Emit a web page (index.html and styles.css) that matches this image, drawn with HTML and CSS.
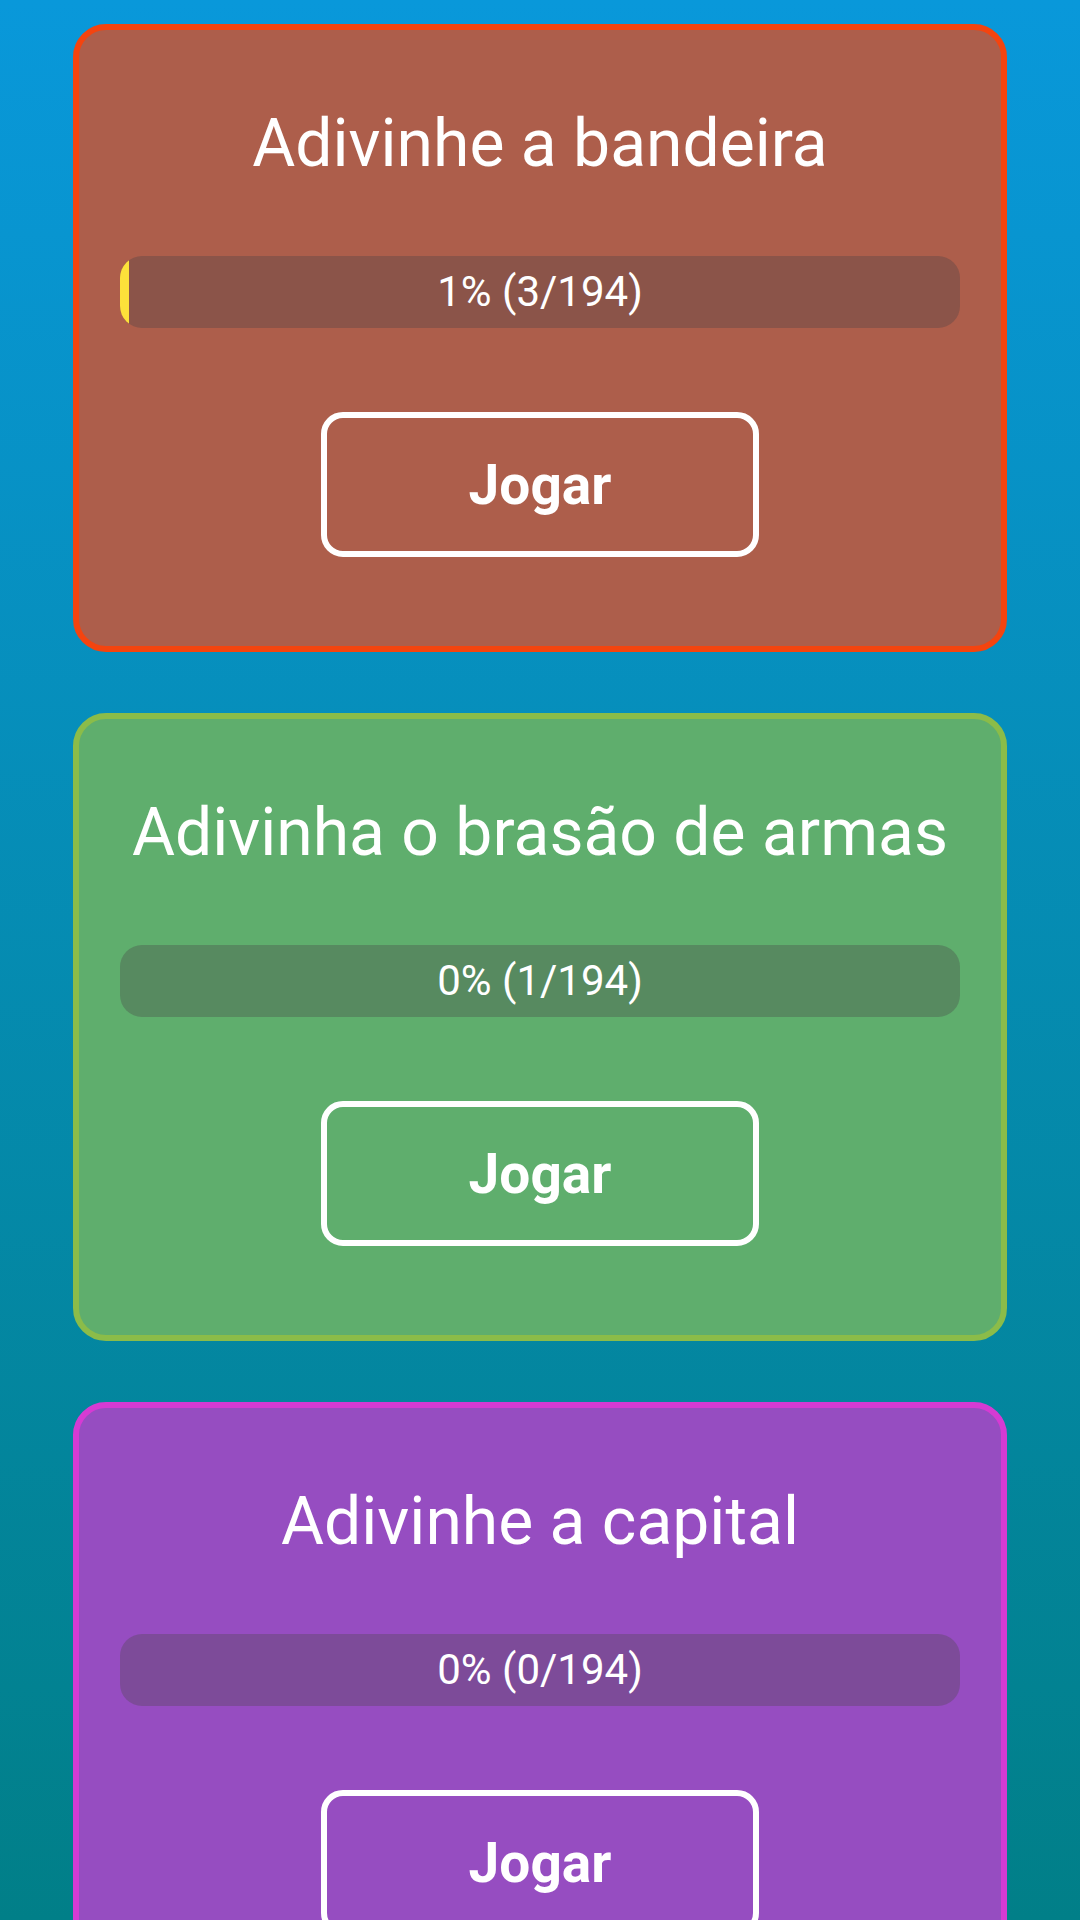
FILE: index.html
```html
<!DOCTYPE html>
<html lang="pt">
<head>
    <meta charset="UTF-8">
    <meta name="viewport" content="width=device-width, initial-scale=1.0">
    <title>Jogos</title>
    <link rel="stylesheet" href="styles.css">
</head>
<body>
    <main class="game-list">
        <section class="game-card card-flag">
            <h2 class="game-title">Adivinhe a bandeira</h2>
            <div class="progress">
                <div class="progress-fill" style="width: 1.1%;"></div>
                <span class="progress-label">1% (3/194)</span>
            </div>
            <button class="play-button">Jogar</button>
        </section>

        <section class="game-card card-coat">
            <h2 class="game-title">Adivinha o brasão de armas</h2>
            <div class="progress">
                <div class="progress-fill" style="width: 0%;"></div>
                <span class="progress-label">0% (1/194)</span>
            </div>
            <button class="play-button">Jogar</button>
        </section>

        <section class="game-card card-capital">
            <h2 class="game-title">Adivinhe a capital</h2>
            <div class="progress">
                <div class="progress-fill" style="width: 0%;"></div>
                <span class="progress-label">0% (0/194)</span>
            </div>
            <button class="play-button">Jogar</button>
        </section>
    </main>
</body>
</html>
```

FILE: styles.css
```css
html, body {
    margin: 0;
    height: 1920px;
    overflow: hidden;
}

body {
    font-family: Roboto, "Noto Sans", sans-serif;
    background: linear-gradient(to bottom, #0998da 0%, #017f88 100%);
    color: #ffffff;
}

.game-list {
    display: flex;
    flex-direction: column;
    gap: 61px;
    padding: 24px 73px 0;
}

.game-card {
    box-sizing: border-box;
    display: flex;
    flex-direction: column;
    align-items: center;
    height: 628px;
    flex-shrink: 0;
    padding: 75px 41px 89px;
    border: 6px solid;
    border-radius: 33px;
}

.card-flag {
    background-color: #ad5e4b;
    border-color: #f4440f;
}

.card-coat {
    background-color: #5fae6d;
    border-color: #8bbc49;
}

.card-capital {
    background-color: #964dc1;
    border-color: #d53bd3;
}

.game-title {
    margin: 0;
    font-size: 66px;
    font-weight: 400;
    line-height: 77px;
    text-align: center;
    white-space: nowrap;
}

.progress {
    display: grid;
    align-self: stretch;
    height: 72px;
    margin-top: 74px;
    border-radius: 22px;
    overflow: hidden;
}

.card-flag .progress {
    background-color: #8b5449;
}

.card-coat .progress {
    background-color: #578a60;
}

.card-capital .progress {
    background-color: #7d4b99;
}

.progress-fill,
.progress-label {
    grid-area: 1 / 1;
}

.progress-fill {
    justify-self: start;
    height: 100%;
    background-color: #fde13a;
}

.progress-label {
    font-size: 42px;
    line-height: 72px;
    text-align: center;
}

.play-button {
    box-sizing: border-box;
    width: 438px;
    height: 145px;
    margin-top: 84px;
    flex-shrink: 0;
    border: 6px solid #ffffff;
    border-radius: 22px;
    background: transparent;
    color: #ffffff;
    font-family: Roboto, "Noto Sans", sans-serif;
    font-size: 55px;
    font-weight: 700;
}
```
